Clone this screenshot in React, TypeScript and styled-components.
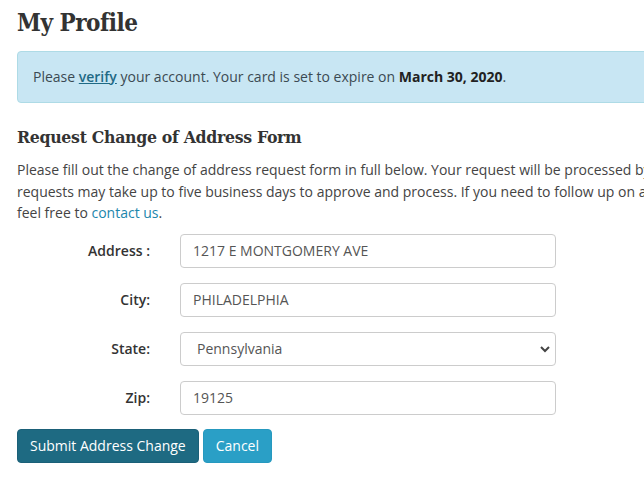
import React from "react";
import styled, { createGlobalStyle } from "styled-components";

const GlobalStyle = createGlobalStyle`
  html, body {
    margin: 0;
    padding: 0;
    background: #fff;
    overflow: hidden;
  }
  body {
    font-family: "Open Sans", "Liberation Sans", sans-serif;
    font-size: 14px;
    color: #444;
  }
`;

const Page = styled.div`
  width: 900px;
  padding: 0 17px;
`;

const Title = styled.h1`
  font-family: "DejaVu Serif", "Liberation Serif", serif;
  font-stretch: condensed;
  font-size: 24px;
  font-weight: 700;
  color: #333;
  margin: 6px 0 12px;
  line-height: 33px;
  letter-spacing: -0.5px;
`;

const Alert = styled.div`
  background: #c8e6f3;
  border: 1px solid #aedbe6;
  border-radius: 4px;
  padding: 15px;
  line-height: 20px;
  color: #3b4a52;
  margin-bottom: 22px;

  a {
    color: #1f6a85;
    font-weight: 600;
    text-decoration: underline;
  }
  strong {
    color: #222;
    font-weight: 700;
  }
`;

const SubTitle = styled.h2`
  font-family: "DejaVu Serif", "Liberation Serif", serif;
  font-stretch: condensed;
  font-size: 17.5px;
  font-weight: 700;
  color: #333;
  margin: 0 0 10px;
  line-height: 24px;
  letter-spacing: -0.3px;
`;

const Intro = styled.p`
  margin: 0 0 10px;
  line-height: 21.5px;
  color: #444;

  a {
    color: #1b86ac;
    text-decoration: none;
  }
`;

const FormGrid = styled.form`
  display: grid;
  grid-template-columns: 133px 376px;
  column-gap: 30px;
  row-gap: 15px;
  align-items: center;
`;

const Label = styled.label`
  text-align: right;
  font-weight: 600;
  color: #333;
`;

const Input = styled.input`
  box-sizing: border-box;
  height: 34px;
  width: 100%;
  border: 1px solid #ccc;
  border-radius: 4px;
  padding: 0 12px;
  font-family: "Open Sans", "Liberation Sans", sans-serif;
  font-size: 14px;
  color: #555;
  background: #fff;
  outline: none;
`;

const SelectWrap = styled.div`
  position: relative;
  height: 34px;
`;

const Select = styled.select`
  box-sizing: border-box;
  appearance: none;
  height: 34px;
  width: 100%;
  border: 1px solid #ccc;
  border-radius: 4px;
  padding: 0 12px 0 16px;
  font-family: "Open Sans", "Liberation Sans", sans-serif;
  font-size: 14px;
  color: #555;
  background: #fff;
  outline: none;
`;

const Chevron = styled.svg`
  position: absolute;
  right: 5px;
  top: 12px;
  pointer-events: none;
`;

const Actions = styled.div`
  display: flex;
  gap: 4px;
  margin-top: 14px;
`;

const Button = styled.button<{ $variant: "primary" | "info" }>`
  height: 34px;
  padding: 0 12px;
  border: 1px solid ${(p) => (p.$variant === "primary" ? "#1b6078" : "#2699bf")};
  border-radius: 4px;
  background: ${(p) => (p.$variant === "primary" ? "#1e6a82" : "#2a9fc6")};
  color: #fff;
  font-family: "Open Sans", "Liberation Sans", sans-serif;
  font-size: 14px;
  cursor: pointer;
`;

export default function App() {
  return (
    <Page>
      <GlobalStyle />
      <Title>My Profile</Title>
      <Alert>
        Please <a href="#">verify</a> your account. Your card is set to expire on{" "}
        <strong>March 30, 2020</strong>.
      </Alert>
      <SubTitle>Request Change of Address Form</SubTitle>
      <Intro>
        Please fill out the change of address request form in full below. Your request will be processed by our staff.
        <br />
        requests may take up to five business days to approve and process. If you need to follow up on a request,
        <br />
        feel free to <a href="#">contact us</a>.
      </Intro>
      <FormGrid onSubmit={(e) => e.preventDefault()}>
        <Label>Address :</Label>
        <Input defaultValue="1217 E MONTGOMERY AVE" />
        <Label>City:</Label>
        <Input defaultValue="PHILADELPHIA" />
        <Label>State:</Label>
        <SelectWrap>
          <Select defaultValue="PA">
            <option value="PA">Pennsylvania</option>
          </Select>
          <Chevron width="12" height="10" viewBox="0 0 12 10">
            <path d="M2 3 L6 7 L10 3" fill="none" stroke="#444" strokeWidth="2" />
          </Chevron>
        </SelectWrap>
        <Label>Zip:</Label>
        <Input defaultValue="19125" />
      </FormGrid>
      <Actions>
        <Button $variant="primary">Submit Address Change</Button>
        <Button $variant="info">Cancel</Button>
      </Actions>
    </Page>
  );
}
